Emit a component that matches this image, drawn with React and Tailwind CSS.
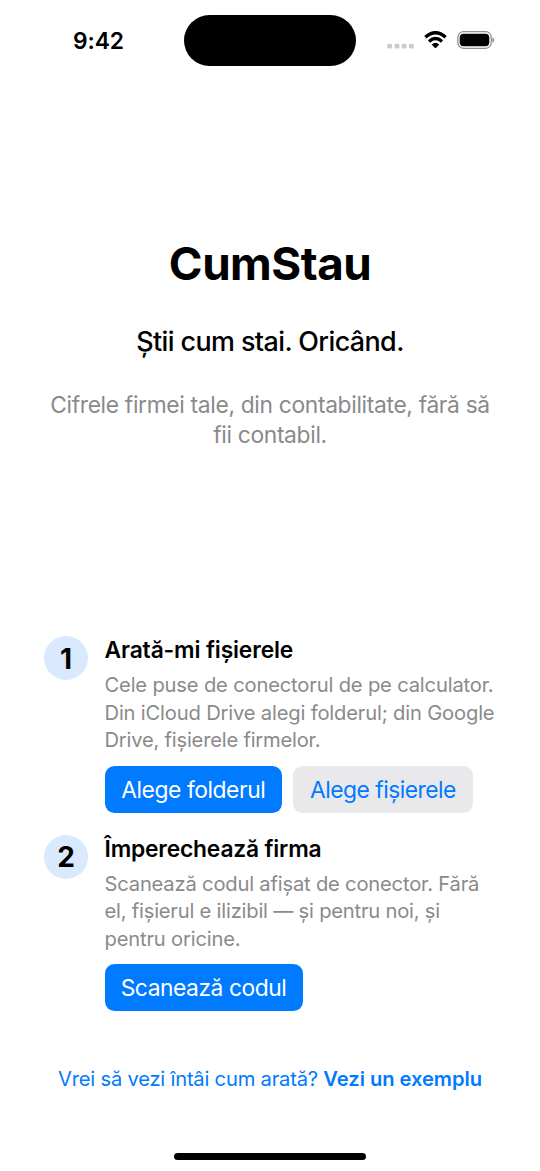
import React from "react";

function StatusBar() {
  return (
    <header className="flex h-[81px] shrink-0 items-start">
      <div className="mt-[26px] w-[184px] pl-[73px] text-[22.8px] leading-[29px] font-semibold tracking-[-0.1px]">9:42</div>
      <div className="mt-[15px] h-[51px] w-[172px] rounded-full bg-black" />
      <div className="mt-[31px] ml-[31px] flex h-[18px] items-center">
        <svg className="h-[18px] w-[27px]" viewBox="0 0 27 18">
          <g fill="#cbcbcb">
            <rect x="0.3" y="12.7" width="4.8" height="4.7" rx="1.2" />
            <rect x="7.6" y="12.7" width="4.8" height="4.7" rx="1.2" />
            <rect x="14.8" y="12.7" width="4.8" height="4.7" rx="1.2" />
            <rect x="22" y="12.7" width="4.8" height="4.7" rx="1.2" />
          </g>
        </svg>
        <svg className="ml-[9.5px] h-[18px] w-[23px]" viewBox="0 0 23 18">
          <path d="M1.4 6.2 Q11.5 -2.7 21.6 6.2" fill="none" stroke="#000" strokeWidth="3.5" />
          <path d="M5 10.4 Q11.5 4.6 18 10.4" fill="none" stroke="#000" strokeWidth="3.3" />
          <path d="M7.7 13.4 Q11.5 10.2 15.3 13.4 L12.2 16.8 Q11.5 17.4 10.8 16.8 Z" fill="#000" />
        </svg>
        <svg className="ml-[10.5px] h-[18px] w-[38px]" viewBox="0 0 38 18">
          <rect x="0.9" y="0.7" width="33.4" height="16.6" rx="5.6" fill="none" stroke="#8f8f8f" strokeWidth="1.3" />
          <rect x="2.7" y="2.8" width="29.6" height="12.4" rx="3.9" fill="#000" />
          <path d="M35.4 6.4 Q37.4 7.4 37.4 9.1 Q37.4 10.8 35.4 11.8 Z" fill="#8f8f8f" />
        </svg>
      </div>
    </header>
  );
}

function Step({ number, title, titleClass, children, actions }) {
  return (
    <section className="flex h-[198.7px] items-start gap-[16.5px]">
      <div className="flex h-[44px] w-[44px] shrink-0 items-center justify-center rounded-full bg-[#d9eaff] text-[28px] leading-[44px] font-bold">
        <span className="pt-[1px]">{number}</span>
      </div>
      <div className="-mt-[0.8px]">
        <h2 className={`text-[22.8px] leading-[30px] font-semibold whitespace-nowrap ${titleClass}`}>{title}</h2>
        <p className="mt-[6px] text-[20.15px] leading-[27.4px] tracking-[-0.16px] whitespace-nowrap text-[#8a8a8b]">{children}</p>
        <div className="mt-[12.2px] flex gap-[11px]">{actions}</div>
      </div>
    </section>
  );
}

function Button({ className, children }) {
  return (
    <button className={`h-[47px] rounded-[9.5px] text-center text-[22.8px] leading-[48px] whitespace-nowrap ${className}`}>
      {children}
    </button>
  );
}

export default function App() {
  return (
    <main className="flex h-[1171px] w-[540px] flex-col overflow-hidden bg-white font-['Inter',sans-serif] text-black">
      <StatusBar />
      <div className="mt-[155px] text-center whitespace-nowrap">
        <h1 className="text-[45.7px] leading-[55px] font-bold tracking-[-0.5px]">CumStau</h1>
        <p className="mt-[33px] text-[26.9px] leading-[34px] font-medium tracking-[-0.59px]">Știi cum stai. Oricând.</p>
        <p className="mt-[32px] text-[22.8px] leading-[30px] tracking-[-0.335px] text-[#8a8a8b]">
          Cifrele firmei tale, din contabilitate, fără să
          <br />
          fii contabil.
        </p>
      </div>
      <div className="mt-[186px] pl-[44px]">
        <Step
          number="1"
          title="Arată-mi fișierele"
          titleClass="tracking-[-0.13px]"
          actions={
            <>
              <Button className="w-[177.5px] bg-[#007aff] tracking-[-0.42px] text-white">Alege folderul</Button>
              <Button className="w-[180px] bg-[#e9e9eb] tracking-[-0.5px] text-[#007aff]">Alege fișierele</Button>
            </>
          }
        >
          Cele puse de conectorul de pe calculator.
          <br />
          Din iCloud Drive alegi folderul; din Google
          <br />
          <span className="tracking-[-0.2px]">Drive, fișierele firmelor.</span>
        </Step>
        <Step
          number="2"
          title="Împerechează firma"
          titleClass="tracking-[-0.18px]"
          actions={<Button className="w-[198px] bg-[#007aff] tracking-[-0.45px] text-white">Scanează codul</Button>}
        >
          <span className="tracking-[-0.18px]">Scanează codul afișat de conector. Fără</span>
          <br />
          <span className="tracking-[-0.2px]">el, fișierul e ilizibil — și pentru noi, și</span>
          <br />
          pentru oricine.
        </Step>
      </div>
      <footer className="mt-[31.6px] flex flex-col items-center">
        <p className="text-[20.15px] leading-[27px] whitespace-nowrap text-[#007aff]">
          <span className="tracking-[-0.2px]">Vrei să vezi întâi cum arată? </span>
          <span className="font-semibold tracking-[-0.04px]">Vezi un exemplu</span>
        </p>
        <div className="mt-[61px] h-[7px] w-[192px] rounded-full bg-black" />
      </footer>
    </main>
  );
}
